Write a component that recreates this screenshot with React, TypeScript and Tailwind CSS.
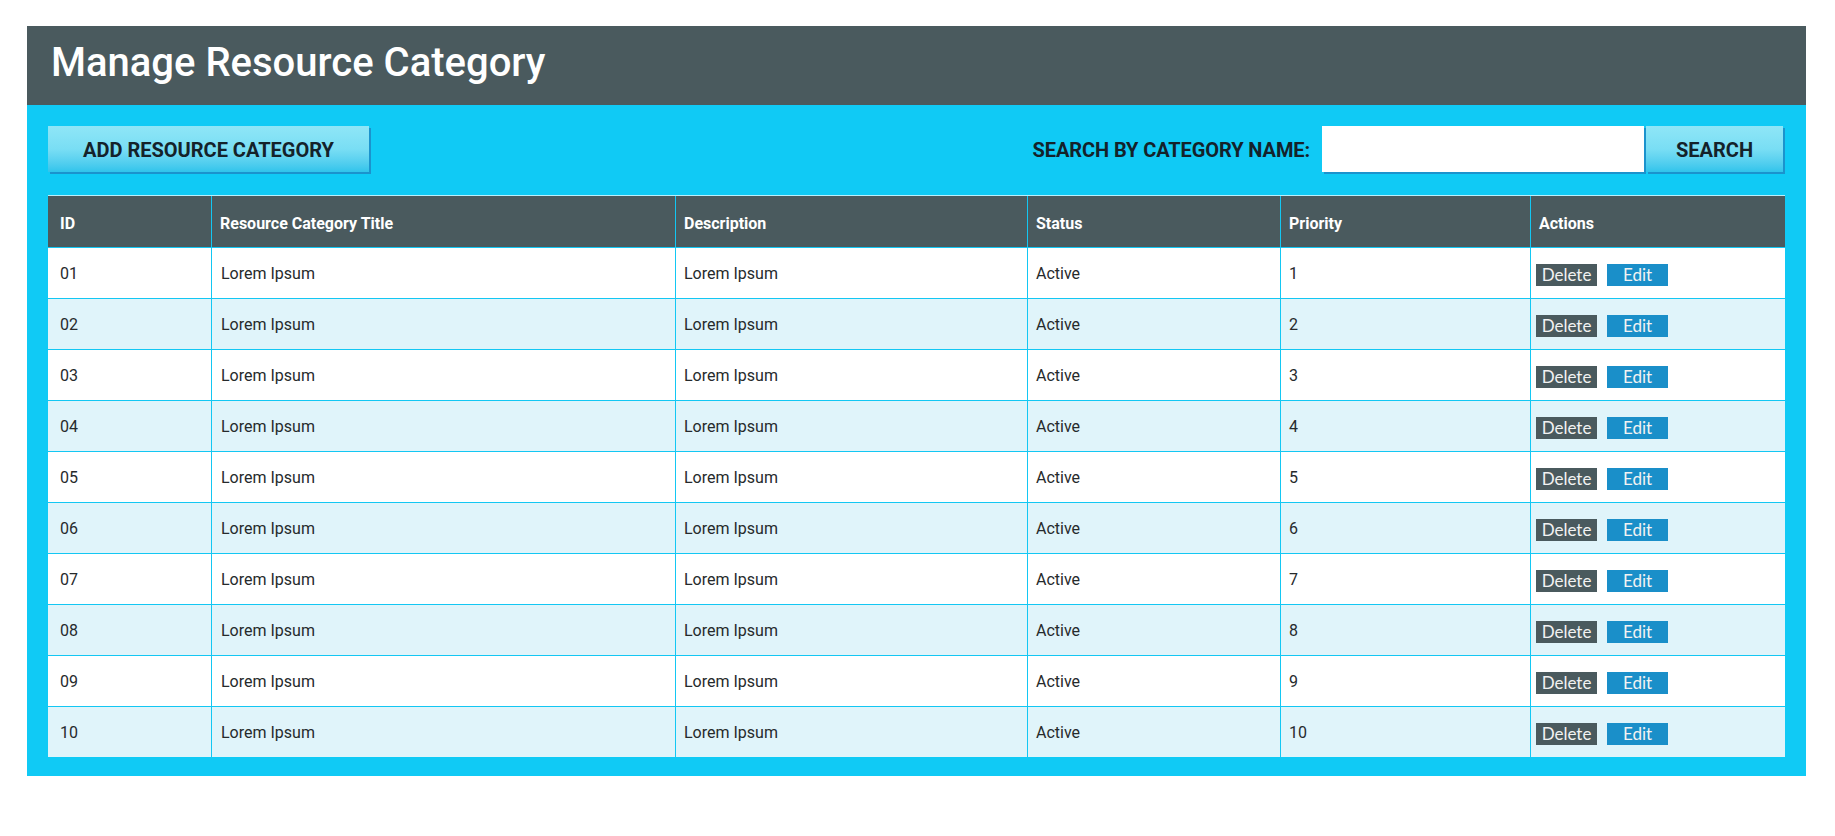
import React from "react";

const rows = Array.from({ length: 10 }, (_, i) => ({
  id: String(i + 1).padStart(2, "0"),
  title: "Lorem Ipsum",
  desc: "Lorem Ipsum",
  status: "Active",
  priority: String(i + 1),
}));

const cols = "grid grid-cols-[163px_464px_352px_253px_250px_255px]";

export default function App() {
  return (
    <div className="min-h-[836px] w-[1835px] bg-white pt-[26px] pl-[27px]" style={{ fontFamily: "Roboto, 'Noto Sans', sans-serif" }}>
      <div className="w-[1779px] bg-[#10caf5]">
        <div className="h-[79px] bg-[#4a5a5e] pl-[24px] pt-[17px]">
          <h1 className="text-[40px] leading-[40px] font-medium text-white">Manage Resource Category</h1>
        </div>
        <div className="px-[21px] pt-[21px] pb-[19px]">
          <div className="flex items-center justify-between pr-[2px]">
            <button className="h-[46px] w-[321px] bg-linear-to-b from-[#8fe6f7] via-[#79def4] to-[#2fc4eb] pt-[2px] text-[20px] font-bold text-[#14222a] shadow-[2px_2px_0_#1b93cd]">
              ADD RESOURCE CATEGORY
            </button>
            <div className="flex items-center">
              <span className="mr-3 pt-[2px] text-[20px] font-bold tracking-[-0.1px] text-[#14222a]">SEARCH BY CATEGORY NAME:</span>
              <input className="h-[46px] w-[322px] bg-white px-3 text-[16px] outline-none shadow-[2px_2px_0_#1b93cd]" />
              <button className="ml-[2px] h-[46px] w-[137px] bg-linear-to-b from-[#8fe6f7] via-[#79def4] to-[#2fc4eb] pt-[2px] text-[20px] font-bold text-[#14222a] shadow-[2px_2px_0_#1b93cd]">
                SEARCH
              </button>
            </div>
          </div>
          <div className="mt-[23px] border-t border-[#b8f0fc]">
            <div className={`${cols} h-[51px] bg-[#4a5a5e] text-[16px] font-bold text-white`}>
              <div className="flex items-center pl-3 pt-[5px]">ID</div>
              <div className="flex items-center border-l border-[#13c7f3] pl-2 pt-[5px]">Resource Category Title</div>
              <div className="flex items-center border-l border-[#13c7f3] pl-2 pt-[5px]">Description</div>
              <div className="flex items-center border-l border-[#13c7f3] pl-2 pt-[5px]">Status</div>
              <div className="flex items-center border-l border-[#13c7f3] pl-2 pt-[5px]">Priority</div>
              <div className="flex items-center border-l border-[#13c7f3] pl-2 pt-[5px]">Actions</div>
            </div>
            {rows.map((r, i) => (
              <div
                key={r.id}
                className={`${cols} h-[51px] border-t border-[#13c7f3] text-[16px] text-[#262a2c] ${i % 2 === 1 ? "bg-[#e0f4fa]" : "bg-white"}`}
              >
                <div className="flex items-center pl-3 pt-[2px]">{r.id}</div>
                <div className="flex items-center border-l border-[#13c7f3] pl-[9px] pt-[2px]">{r.title}</div>
                <div className="flex items-center border-l border-[#13c7f3] pl-2 pt-[2px]">{r.desc}</div>
                <div className="flex items-center border-l border-[#13c7f3] pl-2 pt-[2px]">{r.status}</div>
                <div className="flex items-center border-l border-[#13c7f3] pl-2 pt-[2px]">{r.priority}</div>
                <div className="flex items-center gap-[10px] border-l border-[#13c7f3] pl-[5px] pt-[4px]">
                  <span className="flex h-[22px] w-[61px] items-center justify-center bg-[#4a5a5e] text-[17px] text-[#f2f2f2]" style={{ fontFamily: "Lato, 'Open Sans', sans-serif" }}>
                    Delete
                  </span>
                  <span className="flex h-[22px] w-[61px] items-center justify-center bg-[#1a8fc9] text-[17px] text-[#f2f2f2]" style={{ fontFamily: "Lato, 'Open Sans', sans-serif" }}>
                    Edit
                  </span>
                </div>
              </div>
            ))}
          </div>
        </div>
      </div>
    </div>
  );
}
